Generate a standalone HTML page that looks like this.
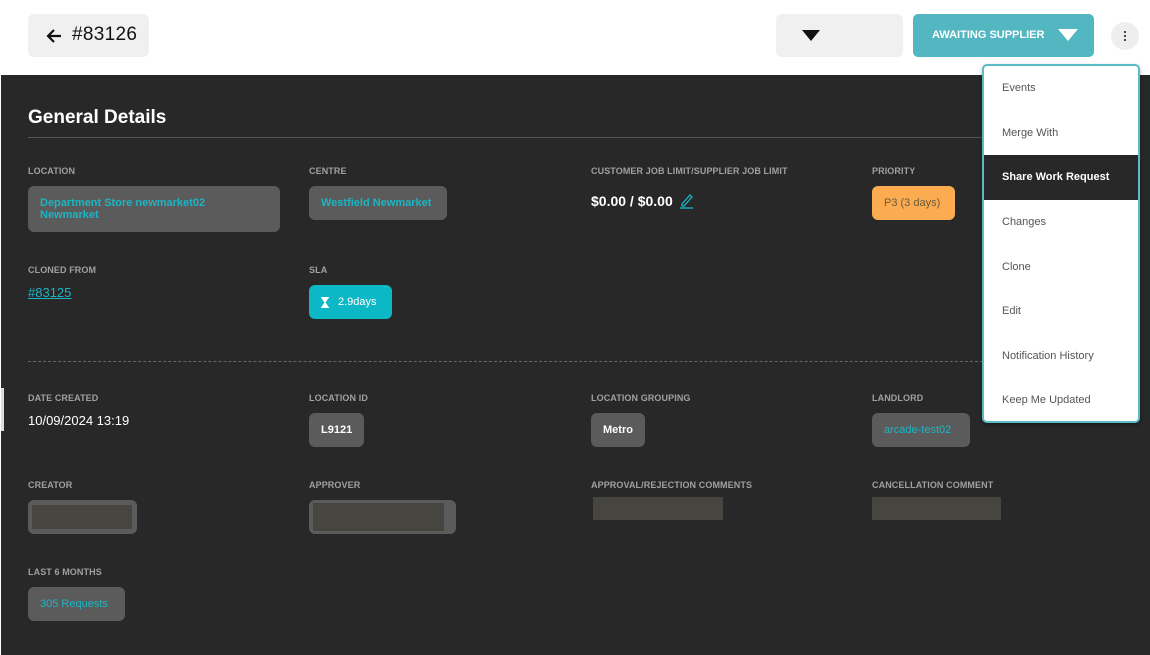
<!DOCTYPE html>
<html><head><style>
*{box-sizing:border-box;margin:0;padding:0}
body{width:1150px;height:655px;background:#fff;font-family:"Liberation Sans",sans-serif;position:relative;overflow:hidden}
.abs{position:absolute}
.dark{position:absolute;left:1px;top:75px;width:1149px;height:580px;background:#282828}
.lbl{position:absolute;font-size:9px;font-weight:bold;color:#a0a0a0;letter-spacing:0.1px}
.chip{position:absolute;background:#5b5b5b;border-radius:6px;font-size:11px;font-weight:bold;color:#1bb5c4;padding:0 12px;display:flex;align-items:center}
.white{color:#fff}
.menu{position:absolute;left:982px;top:64px;width:158px;height:359px;background:#fff;border:2px solid #5bbcc6;border-radius:5px;box-shadow:0 2px 4px rgba(0,0,0,.3)}
.mi{height:44.6px;display:flex;align-items:center;padding-left:18px;font-size:11px;color:#555}
.mi.on{background:#282828;color:#fff;font-weight:bold}
.red{position:absolute;background:#46453f}
</style></head><body>
<div class="abs" style="left:28px;top:14px;width:121px;height:43px;background:#f0f0f0;border-radius:6px"></div>
<svg class="abs" style="left:45px;top:28px" width="18" height="16" viewBox="0 0 18 16"><path d="M16 8H3M9 2L3 8l6 6" stroke="#111" stroke-width="2.2" fill="none"/></svg>
<div class="abs" style="left:72px;top:24px;font-size:19px;color:#111;letter-spacing:0.3px">#83126</div>
<div class="abs" style="left:776px;top:14px;width:127px;height:43px;background:#f0f0f0;border-radius:6px"></div>
<svg class="abs" style="left:802px;top:30px" width="18" height="12"><path d="M0 0h18L9 11z" fill="#111"/></svg>
<div class="abs" style="left:913px;top:14px;width:181px;height:43px;background:#52b7c1;border-radius:5px"></div>
<div class="abs" style="left:932px;top:29px;font-size:11px;font-weight:bold;color:#fff">AWAITING SUPPLIER</div>
<svg class="abs" style="left:1058px;top:29px" width="20" height="13"><path d="M0 0h20L10 12z" fill="#fff"/></svg>
<div class="abs" style="left:1111px;top:22px;width:28px;height:28px;border-radius:50%;background:#eee"></div>
<div class="abs" style="left:1124px;top:31px;width:2px;height:2px;background:#444;box-shadow:0 4px #444,0 8px #444"></div>

<div class="dark"></div>
<div class="abs" style="left:1px;top:388px;width:3px;height:43px;background:#ddd"></div>
<div class="abs" style="left:28px;top:107px;font-size:19px;font-weight:bold;color:#fff">General Details</div>
<div class="abs" style="left:28px;top:137px;width:960px;height:1px;background:#555"></div>
<div class="abs" style="left:28px;top:361px;width:960px;border-top:1px dashed #666"></div>

<div class="lbl" style="left:28px;top:166px">LOCATION</div>
<div class="lbl" style="left:309px;top:166px">CENTRE</div>
<div class="lbl" style="left:591px;top:166px">CUSTOMER JOB LIMIT/SUPPLIER JOB LIMIT</div>
<div class="lbl" style="left:872px;top:166px">PRIORITY</div>
<div class="chip" style="left:28px;top:186px;width:252px;height:46px;line-height:12px">Department Store newmarket02<br>Newmarket</div>
<div class="chip" style="left:309px;top:186px;height:34px;width:138px">Westfield Newmarket</div>
<div class="abs" style="left:591px;top:193px;font-size:14px;font-weight:bold;color:#fff">$0.00 / $0.00</div>
<svg class="abs" style="left:679px;top:193px" width="15" height="16"><path d="M3 11L11 2l2 2-8 9H3z" stroke="#1bb5c4" stroke-width="1.3" fill="none"/><path d="M1 15h13" stroke="#1bb5c4" stroke-width="1.3"/></svg>
<div class="chip" style="left:872px;top:186px;height:34px;width:83px;background:#fcac50;color:#6b5a3c;font-weight:normal">P3 (3 days)</div>

<div class="lbl" style="left:28px;top:265px">CLONED FROM</div>
<div class="lbl" style="left:309px;top:265px">SLA</div>
<div class="abs" style="left:28px;top:285px;font-size:13px;color:#1bb5c4;text-decoration:underline">#83125</div>
<div class="chip" style="left:309px;top:285px;height:34px;width:83px;background:#0db8c6;color:#fff;font-weight:normal"><svg width="8" height="11" style="margin-right:9px"><path d="M0 0.5h8M0 10.5h8M1 1l6 0-3 4.5zM1 10l3-4.5 3 4.5z" stroke="#fff" fill="#fff" stroke-width="1"/></svg>2.9days</div>

<div class="lbl" style="left:28px;top:393px">DATE CREATED</div>
<div class="lbl" style="left:309px;top:393px">LOCATION ID</div>
<div class="lbl" style="left:591px;top:393px">LOCATION GROUPING</div>
<div class="lbl" style="left:872px;top:393px">LANDLORD</div>
<div class="abs" style="left:28px;top:413px;font-size:13px;color:#fff">10/09/2024 13:19</div>
<div class="chip white" style="left:309px;top:413px;height:34px">L9121</div>
<div class="chip white" style="left:591px;top:413px;height:34px">Metro</div>
<div class="chip" style="left:872px;top:413px;height:34px;width:98px;font-weight:normal">arcade-test02</div>

<div class="lbl" style="left:28px;top:480px">CREATOR</div>
<div class="lbl" style="left:309px;top:480px">APPROVER</div>
<div class="lbl" style="left:591px;top:480px">APPROVAL/REJECTION COMMENTS</div>
<div class="lbl" style="left:872px;top:480px">CANCELLATION COMMENT</div>
<div class="chip" style="left:28px;top:500px;width:109px;height:34px"></div>
<div class="red" style="left:32px;top:505px;width:100px;height:24px"></div>
<div class="chip" style="left:309px;top:500px;width:147px;height:34px"></div>
<div class="red" style="left:313px;top:503px;width:131px;height:28px"></div>
<div class="red" style="left:593px;top:497px;width:130px;height:23px"></div>
<div class="red" style="left:872px;top:497px;width:129px;height:23px"></div>

<div class="lbl" style="left:28px;top:567px">LAST 6 MONTHS</div>
<div class="chip" style="left:28px;top:587px;height:34px;width:97px;font-weight:normal">305 Requests</div>

<div class="menu">
<div class="mi">Events</div><div class="mi">Merge With</div><div class="mi on">Share Work Request</div><div class="mi">Changes</div><div class="mi">Clone</div><div class="mi">Edit</div><div class="mi">Notification History</div><div class="mi">Keep Me Updated</div>
</div>
</body></html>
